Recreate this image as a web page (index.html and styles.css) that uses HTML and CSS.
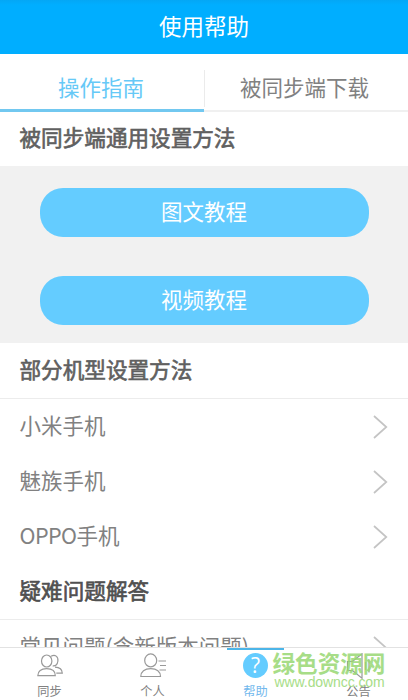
FILE: index.html
```html
<!DOCTYPE html>
<html lang="zh-CN">
<head>
<meta charset="utf-8">
<title>使用帮助</title>
<link rel="stylesheet" href="styles.css">
</head>
<body>
<div class="app">
  <header class="header"><h1>使用帮助</h1></header>
  <div class="tabs">
    <div class="tab active"><span>操作指南</span></div>
    <div class="tab"><span>被同步端下载</span></div>
  </div>
  <main class="content">
    <h2 class="first">被同步端通用设置方法</h2>
    <div class="panel">
      <button>图文教程</button>
      <button>视频教程</button>
    </div>
    <h2 class="ruled">部分机型设置方法</h2>
    <div class="row"><span>小米手机</span><svg class="arrow" viewBox="0 0 15 24"><path d="M1 1 13.3 12 1 23"/></svg></div>
    <div class="row"><span>魅族手机</span><svg class="arrow" viewBox="0 0 15 24"><path d="M1 1 13.3 12 1 23"/></svg></div>
    <div class="row"><span><b>OPPO</b>手机</span><svg class="arrow" viewBox="0 0 15 24"><path d="M1 1 13.3 12 1 23"/></svg></div>
    <h2 class="ruled faq">疑难问题解答</h2>
    <div class="row"><span>常见问题(含新版本问题)</span><svg class="arrow" viewBox="0 0 15 24"><path d="M1 1 13.3 12 1 23"/></svg></div>
  </main>
  <nav class="nav">
    <div class="item">
      <svg class="icon" viewBox="0 0 26 26"><ellipse cx="9.7" cy="8" rx="5.2" ry="6"/><path d="M.8 22.700h17.500c0-4.800-3.200-7-8.700-7S.8 17.900.8 22.700ZM14 3.300c4.200-2.300 7.400.3 6.900 4.700-.4 3.600-2.500 5.500-5.200 4.800M18 14.200c4.600.2 7.200 2.500 7.300 6h-6"/></svg>
      <span>同步</span>
    </div>
    <div class="item">
      <svg class="icon" viewBox="0 0 26 26"><ellipse cx="10.7" cy="7.4" rx="6" ry="6.5"/><path d="M.8 23.500h19.700c0-4.900-3.700-7.800-9.800-7.800S.8 18.600.8 23.500ZM18.500 8H26M20 12.500h6M19.500 17H26"/></svg>
      <span>个人</span>
    </div>
    <div class="item current">
      <div class="help">?</div>
      <span>帮助</span>
    </div>
    <div class="item">
      <svg class="icon" viewBox="0 0 26 26"><path d="M1.500 8.500h5L16 .8v24.400l-9.500-7.700h-5ZM19.500 9v8M23 6.500v13"/></svg>
      <span>公告</span>
    </div>
  </nav>
  <div class="watermark"><strong>绿色资源网</strong><span>www.downcc.com</span></div>
</div>
</body>
</html>
```
FILE: styles.css
```css
* { box-sizing: border-box; }
body { margin: 0; }
.app {
  position: relative;
  display: flex;
  flex-direction: column;
  width: 408px;
  height: 700px;
  overflow: hidden;
  background: #fff;
  color: #818181;
  font: 21.5px/32px "Noto Sans CJK SC", sans-serif;
}
.header {
  flex: none;
  height: 54px;
  padding-top: 9px;
  background: linear-gradient(#04a7f5, #00aeff 5px);
  color: #fff;
  text-align: center;
}
h1 { margin: 0; font-size: 22.5px; font-weight: 400; line-height: 32px; }
.tabs { flex: none; display: flex; height: 58px; padding-top: 16px; }
.tab {
  flex: 1;
  height: 42px;
  border-bottom: 2px solid #f0f0f0;
  text-align: center;
}
.tab span { display: block; height: 37px; padding-right: 2px; line-height: 33px; }
.tab + .tab span { padding-right: 4px; border-left: 1px solid #ebebeb; }
.tab.active { border-bottom: 3px solid #72c8f0; color: #66c9f7; }
.content { flex: 1; min-height: 0; overflow: hidden; }
h2 {
  margin: 0;
  height: 55px;
  padding: 9px 19.5px 0;
  color: #606060;
  font-size: 21.6px;
  font-weight: 400;
  line-height: 32px;
  -webkit-text-stroke: .65px #606060;
}
h2.first { height: 54px; }
h2.ruled { height: 56px; padding-top: 10px; border-bottom: 1px solid #ececec; }
h2.faq { color: #505050; -webkit-text-stroke-color: #505050; }
.panel {
  display: flex;
  flex-direction: column;
  gap: 39.5px;
  height: 177px;
  padding: 22px 39.5px;
  background: #f1f1f1;
}
button {
  flex: none;
  height: 48.5px;
  padding: 0 0 3px;
  border: 0;
  border-radius: 23px;
  background: #64ccff;
  color: #fff;
  font: inherit;
}
.row {
  display: flex;
  align-items: center;
  justify-content: space-between;
  height: 55px;
  padding: 0 20px 0 19.5px;
}
.row span { margin-top: -4px; }
.row b { font-weight: 400; letter-spacing: -.55px; }
.arrow { width: 15px; height: 24px; fill: none; stroke: #c4c4c4; stroke-width: 1.7; }
.nav {
  flex: none;
  display: flex;
  height: 53px;
  margin: 0 -2px;
  border-top: 1px solid #e2e2e2;
  background: #fff;
}
.item {
  position: relative;
  flex: 1;
  display: flex;
  flex-direction: column;
  align-items: center;
  padding-top: 5px;
  font-size: 12.2px;
  line-height: 18px;
}
.icon { width: 26px; height: 26px; fill: none; stroke: #999; stroke-width: 1.2; }
.item span { margin-top: 3px; }
.current { color: #72b8ed; }
.current::before {
  content: "";
  position: absolute;
  top: 0;
  width: 57px;
  height: 2px;
  background: #4cb5e8;
}
.help {
  width: 25px;
  height: 25px;
  margin-bottom: 1px;
  border-radius: 50%;
  background: #64ccff;
  color: #fff;
  font: 400 21px/25px "Open Sans", "Noto Sans", sans-serif;
  text-align: center;
}
.watermark {
  position: absolute;
  left: 272.5px;
  top: 648.5px;
  display: flex;
  flex-direction: column;
  color: #98d873;
  opacity: .85;
  white-space: nowrap;
}
.watermark strong { font-size: 22.6px; line-height: 27px; }
.watermark span { margin-left: 2px; font: 14px/13px "Liberation Sans", sans-serif; letter-spacing: -.08px; }
```
